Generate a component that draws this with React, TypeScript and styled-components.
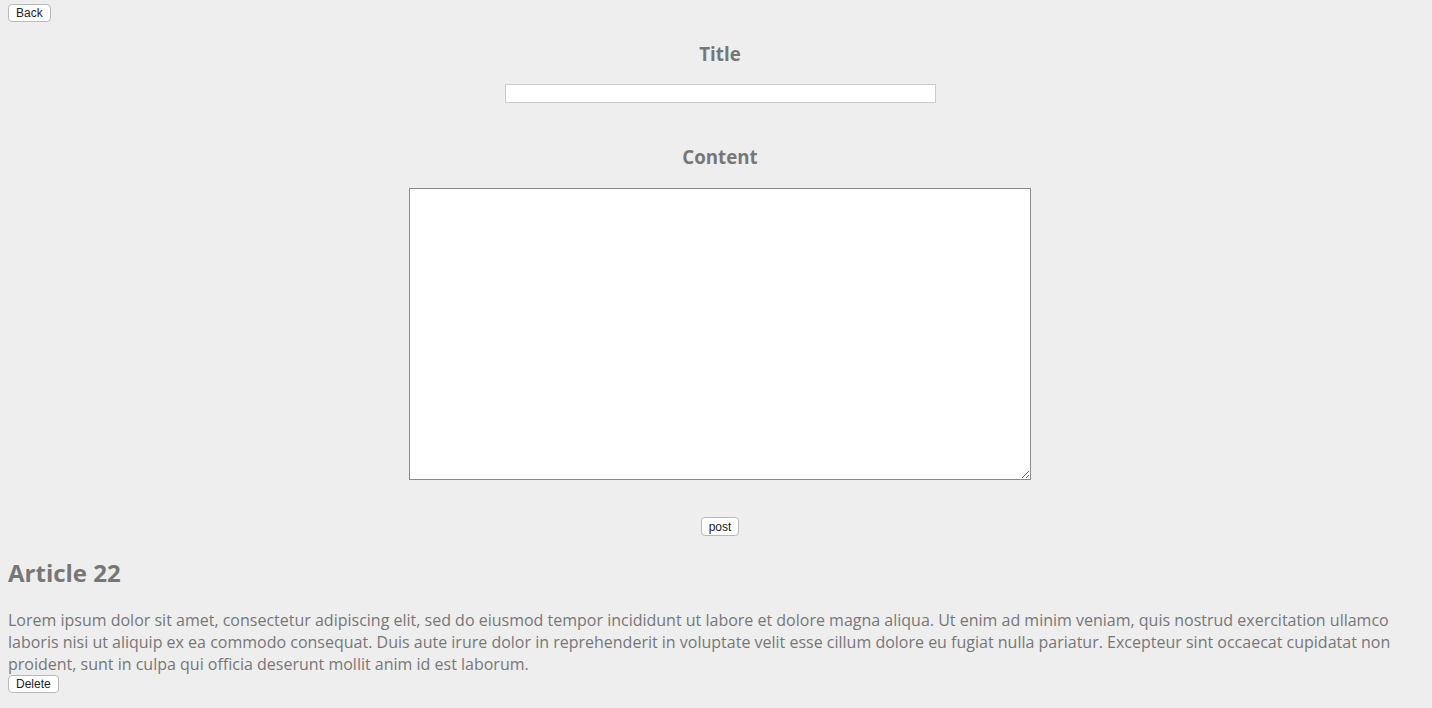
import styled, { createGlobalStyle } from "styled-components";

const GlobalStyle = createGlobalStyle`
    html, body {
        background: #eeeeee;
    }

    body {
        margin: 4px 0 8px 8px;
        font-family: "Open Sans", "Liberation Sans", sans-serif;
        color: #777777;
    }
`;

const Page = styled.div`
    display: flex;
    flex-direction: column;
    align-items: flex-start;
`;

const SmallButton = styled.button`
    font-family: "Liberation Sans", Arial, sans-serif;
    font-size: 12px;
    line-height: 14px;
    color: #222;
    background: #ffffff;
    border: 1px solid #b9b9b9;
    border-radius: 4px;
    padding: 1px 7px;
    height: 18px;
    cursor: pointer;
`;

const EditorForm = styled.form`
    align-self: stretch;
    display: flex;
    flex-direction: column;
    align-items: center;
    margin-top: 20px;
`;

const FieldLabel = styled.h3`
    font-size: 18.72px;
    line-height: 24px;
    font-weight: 700;
    margin: 0;
`;

const TitleInput = styled.input`
    box-sizing: border-box;
    width: 431px;
    height: 19px;
    margin: 18px 0 42px;
    border: 1px solid #cccccc;
    background: #ffffff;
`;

const ContentArea = styled.textarea`
    box-sizing: border-box;
    width: 622px;
    height: 292px;
    margin: 19px 0 37px;
    border: 1px solid #8a8a8a;
    background: #ffffff;
    resize: both;
`;

const PostButton = styled(SmallButton)`
    height: 19px;
`;

const Article = styled.article`
    display: flex;
    flex-direction: column;
    align-items: flex-start;
    margin-top: 21px;
    padding-right: 8px;
`;

const ArticleTitle = styled.h2`
    font-size: 24px;
    line-height: 32px;
    font-weight: 700;
    margin: 0 0 20px;
`;

const ArticleBody = styled.p`
    font-size: 16px;
    line-height: 22px;
    margin: 0;
`;

const lorem =
    "Lorem ipsum dolor sit amet, consectetur adipiscing elit, sed do eiusmod tempor incididunt ut labore et dolore magna aliqua. Ut enim ad minim veniam, quis nostrud exercitation ullamco laboris nisi ut aliquip ex ea commodo consequat. Duis aute irure dolor in reprehenderit in voluptate velit esse cillum dolore eu fugiat nulla pariatur. Excepteur sint occaecat cupidatat non proident, sunt in culpa qui officia deserunt mollit anim id est laborum.";

export default function App() {
    return (
        <>
            <GlobalStyle />
            <Page>
                <SmallButton type="button">Back</SmallButton>

                <EditorForm onSubmit={e => e.preventDefault()}>
                    <FieldLabel>Title</FieldLabel>
                    <TitleInput type="text" />
                    <FieldLabel>Content</FieldLabel>
                    <ContentArea />
                    <PostButton type="submit">post</PostButton>
                </EditorForm>

                <Article>
                    <ArticleTitle>Article 22</ArticleTitle>
                    <ArticleBody>{lorem}</ArticleBody>
                    <SmallButton type="button">Delete</SmallButton>
                </Article>
            </Page>
        </>
    );
}
